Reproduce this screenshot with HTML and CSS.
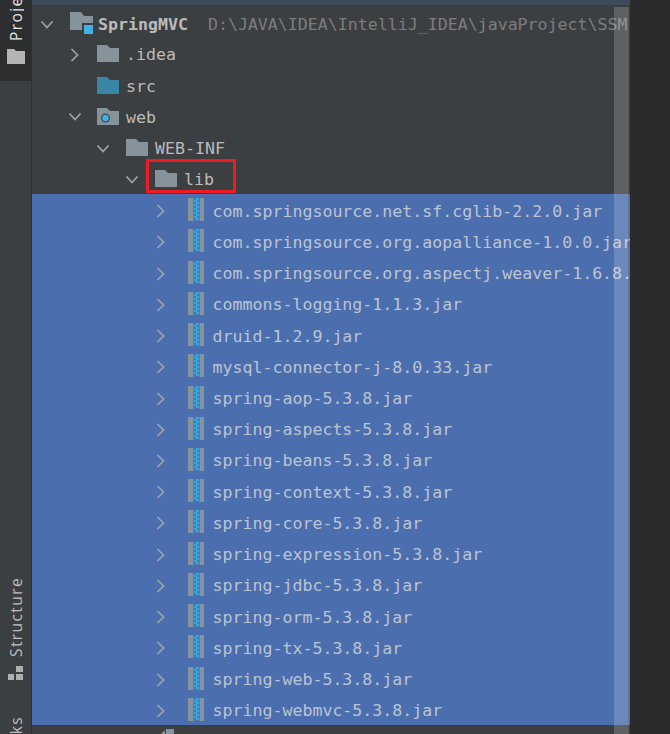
FILE: index.html
```html
<!DOCTYPE html>
<html lang="en">
<head>
<meta charset="utf-8">
<title>Project tree</title>
<link rel="stylesheet" href="styles.css">
</head>
<body>
<svg class="defs" aria-hidden="true">
  <symbol id="down" viewBox="0 0 14 14"><path d="M1.5 3.5 7 9.5l5.500-6" fill="none" stroke="currentColor" stroke-width="1.700"/></symbol>
  <symbol id="right" viewBox="0 0 14 14"><path d="M3.500 1 9.500 7l-6 6" fill="none" stroke="currentColor" stroke-width="1.700"/></symbol>
  <symbol id="folder" viewBox="0 0 22 18"><path d="M0 1h10l3 3h9v14H0z" fill="currentColor"/></symbol>
  <symbol id="root" viewBox="0 0 24 22"><path d="M0 0h11l3 4h9v14H0z" fill="#87939a"/><path d="M12 11h12v11H12z" fill="#3c3f41"/><path d="M14 13h9v9h-9z" fill="#3fb3e2"/></symbol>
  <symbol id="web" viewBox="0 0 22 18"><path d="M0 1h10l3 3h9v14H0z" fill="#87939a"/><circle cx="8.500" cy="11" r="4.500" fill="#3c4a55"/><circle cx="8.500" cy="11" r="3.200" fill="#3fb3e2"/></symbol>
  <symbol id="jar" viewBox="0 0 16 23"><path d="M0 0h5.500v23H0zM11.500 0H16v23h-4.500z" fill="#87939a"/><path d="M5.500 0h6v23h-6z" fill="#4f76b0"/><path d="M8 0h3v2H8zM6 2h3v2H6zM8 4h3v2H8zM6 6h3v2H6zM8 8h3v2H8zM6 10h3v2H6zM8 12h3v2H8zM6 14h3v2H6zM8 16h3v2H8zM6 18h3v2H6zM8 20h3v2H8z" fill="#2ea9e2"/></symbol>
</svg>
<div class="window">
  <nav class="rail">
    <div class="tab-project">
      <span class="tab-label tab-label-cut">Project</span>
      <svg class="rail-folder" viewBox="0 0 18 15"><path d="M0 0h7l2 2h9v13H0z" fill="#b4b4b4"/></svg>
    </div>
    <span class="tab-label tab-structure">Structure</span>
    <svg class="rail-struct" viewBox="0 0 15 14"><path d="M8 0h7v6H8zM0 8h6v6H0zM8 8h7v6H8z" fill="#b0b0b0"/></svg>
    <span class="tab-label tab-bookmarks">Bookmarks</span>
  </nav>
  <main class="panel">
    <div class="strip"></div>
    <div class="tree">
      <div class="row d0 root-row"><svg class="chev"><use href="#down"/></svg><svg class="ico ico-root"><use href="#root"/></svg><span class="name bold">SpringMVC</span><span class="path">D:\JAVA\IDEA\IntelliJ_IDEA\javaProject\SSM</span></div>
      <div class="row d1"><svg class="chev"><use href="#right"/></svg><svg class="ico"><use href="#folder"/></svg><span class="name">.idea</span></div>
      <div class="row d1"><span class="chev"></span><svg class="ico ico-src"><use href="#folder"/></svg><span class="name">src</span></div>
      <div class="row d1"><svg class="chev"><use href="#down"/></svg><svg class="ico"><use href="#web"/></svg><span class="name">web</span></div>
      <div class="row d2"><svg class="chev"><use href="#down"/></svg><svg class="ico"><use href="#folder"/></svg><span class="name">WEB-INF</span></div>
      <div class="row d3"><svg class="chev"><use href="#down"/></svg><svg class="ico"><use href="#folder"/></svg><span class="name">lib</span></div>
      <div class="row d4 sel"><svg class="chev"><use href="#right"/></svg><span class="slot"><svg class="jar"><use href="#jar"/></svg></span><span class="name">com.springsource.net.sf.cglib-2.2.0.jar</span></div>
      <div class="row d4 sel"><svg class="chev"><use href="#right"/></svg><span class="slot"><svg class="jar"><use href="#jar"/></svg></span><span class="name">com.springsource.org.aopalliance-1.0.0.jar</span></div>
      <div class="row d4 sel"><svg class="chev"><use href="#right"/></svg><span class="slot"><svg class="jar"><use href="#jar"/></svg></span><span class="name">com.springsource.org.aspectj.weaver-1.6.8.RELEASE.jar</span></div>
      <div class="row d4 sel"><svg class="chev"><use href="#right"/></svg><span class="slot"><svg class="jar"><use href="#jar"/></svg></span><span class="name">commons-logging-1.1.3.jar</span></div>
      <div class="row d4 sel"><svg class="chev"><use href="#right"/></svg><span class="slot"><svg class="jar"><use href="#jar"/></svg></span><span class="name">druid-1.2.9.jar</span></div>
      <div class="row d4 sel"><svg class="chev"><use href="#right"/></svg><span class="slot"><svg class="jar"><use href="#jar"/></svg></span><span class="name">mysql-connector-j-8.0.33.jar</span></div>
      <div class="row d4 sel"><svg class="chev"><use href="#right"/></svg><span class="slot"><svg class="jar"><use href="#jar"/></svg></span><span class="name">spring-aop-5.3.8.jar</span></div>
      <div class="row d4 sel"><svg class="chev"><use href="#right"/></svg><span class="slot"><svg class="jar"><use href="#jar"/></svg></span><span class="name">spring-aspects-5.3.8.jar</span></div>
      <div class="row d4 sel"><svg class="chev"><use href="#right"/></svg><span class="slot"><svg class="jar"><use href="#jar"/></svg></span><span class="name">spring-beans-5.3.8.jar</span></div>
      <div class="row d4 sel"><svg class="chev"><use href="#right"/></svg><span class="slot"><svg class="jar"><use href="#jar"/></svg></span><span class="name">spring-context-5.3.8.jar</span></div>
      <div class="row d4 sel"><svg class="chev"><use href="#right"/></svg><span class="slot"><svg class="jar"><use href="#jar"/></svg></span><span class="name">spring-core-5.3.8.jar</span></div>
      <div class="row d4 sel"><svg class="chev"><use href="#right"/></svg><span class="slot"><svg class="jar"><use href="#jar"/></svg></span><span class="name">spring-expression-5.3.8.jar</span></div>
      <div class="row d4 sel"><svg class="chev"><use href="#right"/></svg><span class="slot"><svg class="jar"><use href="#jar"/></svg></span><span class="name">spring-jdbc-5.3.8.jar</span></div>
      <div class="row d4 sel"><svg class="chev"><use href="#right"/></svg><span class="slot"><svg class="jar"><use href="#jar"/></svg></span><span class="name">spring-orm-5.3.8.jar</span></div>
      <div class="row d4 sel"><svg class="chev"><use href="#right"/></svg><span class="slot"><svg class="jar"><use href="#jar"/></svg></span><span class="name">spring-tx-5.3.8.jar</span></div>
      <div class="row d4 sel"><svg class="chev"><use href="#right"/></svg><span class="slot"><svg class="jar"><use href="#jar"/></svg></span><span class="name">spring-web-5.3.8.jar</span></div>
      <div class="row d4 sel"><svg class="chev"><use href="#right"/></svg><span class="slot"><svg class="jar"><use href="#jar"/></svg></span><span class="name">spring-webmvc-5.3.8.jar</span></div>
    </div>
    <div class="hbar"><span class="hbar-arrow"></span><span class="hbar-thumb"></span></div>
    <div class="vscroll"></div>
    <div class="callout"></div>
  </main>
  <aside class="side"></aside>
</div>
</body>
</html>
```

FILE: styles.css
```css
html, body {
  margin: 0;
  height: 100%;
  overflow: hidden;
  background: #2b2b2b;
}

.defs {
  display: none;
}

.window {
  display: flex;
  width: 670px;
  height: 734px;
  overflow: hidden;
}

/* left tool-window rail */
.rail {
  flex: 0 0 31px;
  display: flex;
  flex-direction: column;
  align-items: center;
  background: #3c3f41;
  border-right: 1px solid #2f3132;
  overflow: hidden;
}

.tab-project {
  flex: none;
  display: flex;
  flex-direction: column;
  align-items: center;
  width: 100%;
  height: 81px;
  background: #2c2e2f;
}

.tab-label {
  flex: none;
  font-family: "Open Sans", sans-serif;
  font-size: 15.5px;
  line-height: 16px;
  letter-spacing: 1.4px;
  color: #bcbcbc;
  white-space: nowrap;
  writing-mode: vertical-rl;
  transform: rotate(180deg);
}

.tab-label-cut {
  height: 41px;
  overflow: hidden;
  color: #e4e4e4;
}

.rail-folder {
  width: 18px;
  height: 15px;
  margin-top: 8px;
}

.tab-structure {
  margin-top: 496px;
}

.rail-struct {
  flex: none;
  width: 15px;
  height: 14px;
  margin-top: 9px;
}

.tab-bookmarks {
  margin-top: 36px;
}

/* project tree panel */
.panel {
  position: relative;
  flex: 0 0 598px;
  display: flex;
  flex-direction: column;
  height: 734px;
  background: #3c3f41;
  overflow: hidden;
}

.strip {
  flex: none;
  height: 6px;
  background: #3d4b5c;
  border-bottom: 1px solid #383c40;
  box-sizing: border-box;
}

.tree {
  flex: none;
  display: grid;
  grid-auto-rows: 31.235px;
  margin-top: 0.6px;
}

.row {
  display: flex;
  align-items: center;
  box-sizing: border-box;
  padding-top: 3px;
  white-space: nowrap;
  font-family: "DejaVu Sans Mono", monospace;
  font-size: 16.6px;
  color: #bbbbbb;
}

.root-row {
  padding-top: 5px;
}

.d0 { padding-left: 8px; }
.d1 { padding-left: 36px; }
.d2 { padding-left: 64px; }
.d3 { padding-left: 93px; }
.d4 { padding-left: 121.5px; }

.sel {
  background: #4b6eaf;
  color: #bcc4d2;
}

.chev {
  flex: none;
  width: 14px;
  height: 14px;
  margin-right: 15px;
  color: #a0a3a6;
}

.d2 .chev,
.d3 .chev {
  margin-right: 16px;
}

.ico {
  flex: none;
  width: 22px;
  height: 18px;
  color: #87939a;
  margin-top: -3px;
}

.ico-root {
  width: 24px;
  height: 22px;
  margin-top: -3px;
  margin-left: 1px;
}

.ico-src {
  color: #3a86a6;
}

.slot {
  flex: none;
  display: flex;
  justify-content: center;
  width: 22px;
  margin-left: 2px;
}

.jar {
  width: 16px;
  height: 23px;
  margin-top: -3px;
}

.name {
  flex: none;
  margin-left: 7px;
}

.sel .name {
  margin-left: 6px;
}

.bold {
  font-weight: bold;
  margin-left: 4px;
}

.path {
  flex: none;
  margin-left: 20px;
  color: #7b7d7e;
}

/* bottom horizontal scrollbar remnant */
.hbar {
  flex: 1;
  display: flex;
  align-items: flex-end;
  padding-left: 129px;
  gap: 1px;
}

.hbar-arrow {
  width: 0;
  height: 0;
  border-style: solid;
  border-width: 0 0 4px 4px;
  border-color: transparent transparent #8d9193 transparent;
}

.hbar-thumb {
  width: 8px;
  height: 5px;
  background: #87939a;
}

/* overlays */
.vscroll {
  position: absolute;
  top: 7px;
  right: 1px;
  bottom: 0;
  width: 14px;
  background: rgba(255, 255, 255, 0.18);
  border-right: 1px solid rgba(0, 0, 0, 0.12);
}

.callout {
  position: absolute;
  left: 114px;
  top: 159px;
  width: 84px;
  height: 28px;
  border: 3px solid #ed1c24;
}

/* right neighbouring panel */
.side {
  flex: 1;
  background: #2b2b2b;
}
```
